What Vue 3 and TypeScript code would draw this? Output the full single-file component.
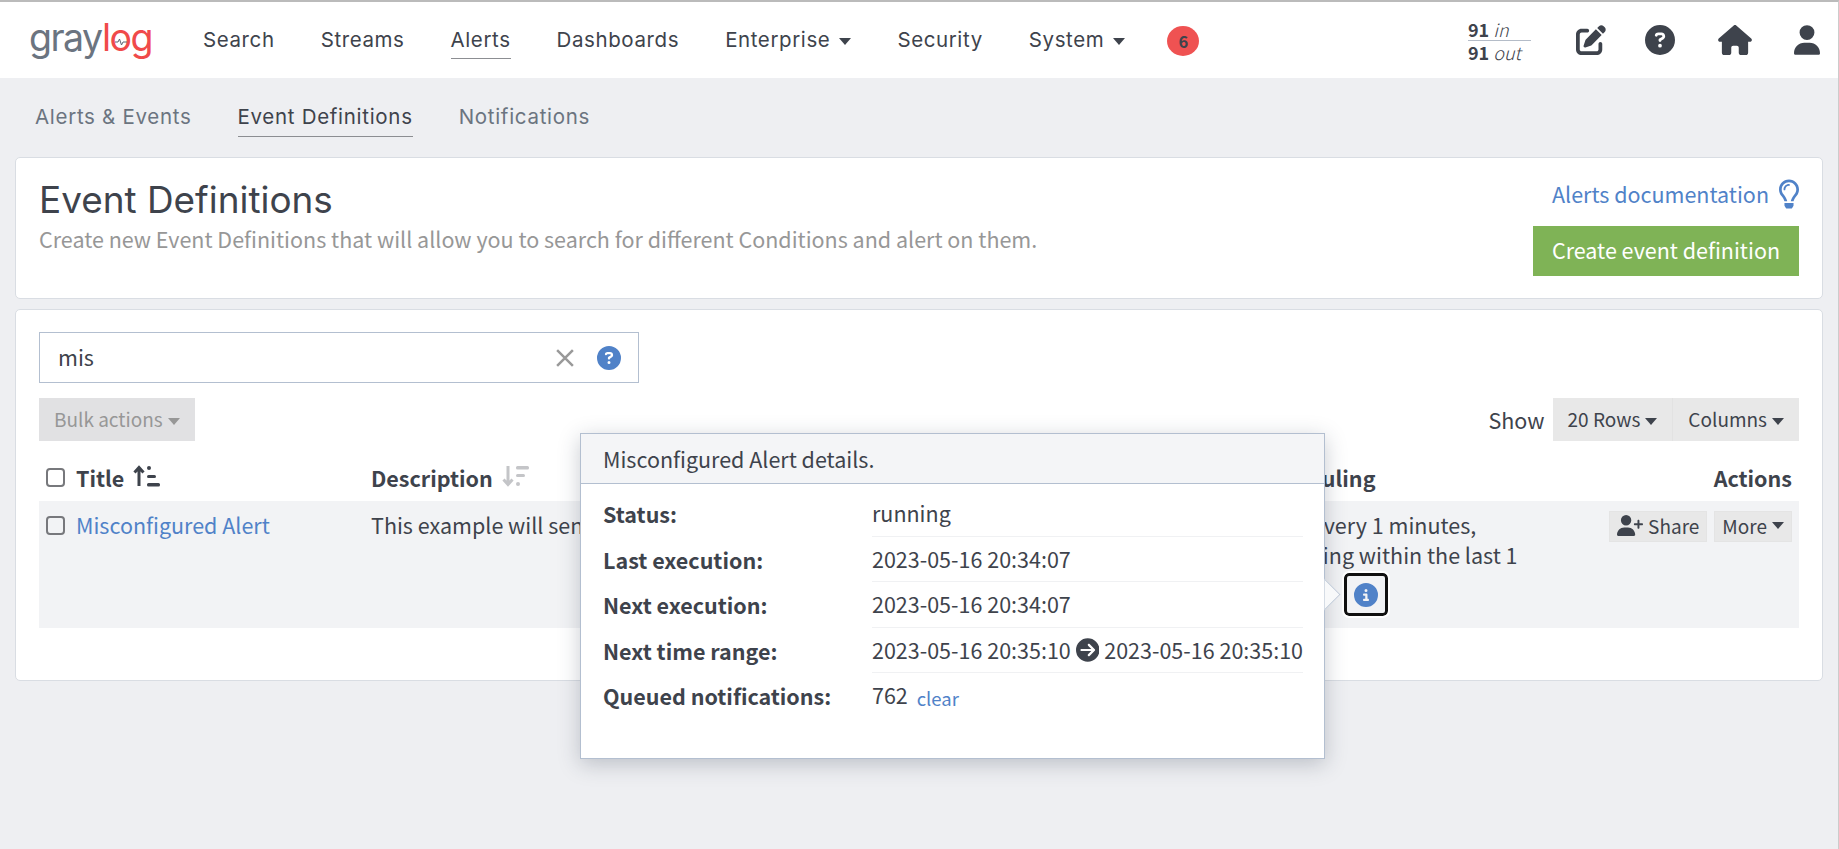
<script setup lang="ts">
const mainNav = [
  { label: 'Search' },
  { label: 'Streams' },
  { label: 'Alerts', active: true },
  { label: 'Dashboards' },
  { label: 'Enterprise', caret: true },
  { label: 'Security' },
  { label: 'System', caret: true }
]

const subNav = [
  { label: 'Alerts & Events' },
  { label: 'Event Definitions', active: true },
  { label: 'Notifications' }
]

const details = [
  { label: 'Status:', value: 'running' },
  { label: 'Last execution:', value: '2023-05-16 20:34:07' },
  { label: 'Next execution:', value: '2023-05-16 20:34:07' }
]
</script>

<template>
  <div class="page">
    <header class="topbar">
      <div class="logo">
        <span class="logo-gray">gray</span><span class="logo-red">l<span class="logo-o">o<svg class="pulse" viewBox="0 0 12 8"><path d="M0 4h3l1.5-3 2 6L8 4h4" fill="none" stroke="#5b6472" stroke-width="1" /></svg></span>g</span>
      </div>
      <nav class="main-nav">
        <a v-for="item in mainNav" :key="item.label" class="nav-link" :class="{ active: item.active }">
          {{ item.label }}<i v-if="item.caret" class="caret nav-caret"></i>
        </a>
        <span class="badge">6</span>
      </nav>
      <div class="throughput">
        <div><b>91</b> <em>in</em></div>
        <div class="out"><b>91</b> <em>out</em></div>
      </div>
      <div class="top-icons">
        <svg class="top-icon" viewBox="0 0 512 512"><path d="M471.6 21.7c-21.9-21.9-57.3-21.9-79.2 0L362.3 51.7l97.9 97.9 30.1-30.1c21.9-21.9 21.9-57.3 0-79.2L471.6 21.7zm-299.2 220c-6.1 6.1-10.8 13.6-13.5 21.9l-29.6 88.8c-2.9 8.6-.6 18.1 5.8 24.6s15.9 8.7 24.6 5.8l88.8-29.6c8.2-2.7 15.7-7.4 21.9-13.5L437.7 172.3 339.7 74.3 172.4 241.7zM96 64C43 64 0 107 0 160V416c0 53 43 96 96 96H352c53 0 96-43 96-96V320c0-17.7-14.3-32-32-32s-32 14.3-32 32v96c0 17.7-14.3 32-32 32H96c-17.7 0-32-14.3-32-32V160c0-17.7 14.3-32 32-32h96c17.7 0 32-14.3 32-32s-14.3-32-32-32H96z" /></svg>
        <svg class="top-icon help" viewBox="0 0 512 512"><path d="M256 512A256 256 0 1 0 256 0a256 256 0 1 0 0 512zM169.8 165.3c7.9-22.3 29.1-37.3 52.8-37.3h58.3c34.9 0 63.1 28.3 63.1 63.1c0 22.6-12.1 43.5-31.7 54.8L280 264.4c-.2 13-10.9 23.6-24 23.6c-13.3 0-24-10.7-24-24V250.5c0-8.6 4.6-16.5 12.1-20.8l44.3-25.4c4.7-2.7 7.6-7.7 7.6-13.1c0-8.4-6.8-15.1-15.1-15.1H222.6c-3.4 0-6.4 2.1-7.5 5.3l-.4 1.2c-4.4 12.5-18.2 19-30.6 14.6s-19-18.2-14.6-30.6l.4-1.2zM224 352a32 32 0 1 1 64 0 32 32 0 1 1 -64 0z" /></svg>
        <svg class="top-icon home" viewBox="0 0 576 512"><path d="M575.8 255.5c0 18-15 32.1-32 32.1h-32l.7 160.2c0 2.7-.2 5.4-.5 8.1V472c0 22.1-17.9 40-40 40H456c-1.1 0-2.2 0-3.3-.1c-1.4 .1-2.8 .1-4.2 .1H416 392c-22.1 0-40-17.9-40-40V448 384c0-17.7-14.3-32-32-32H256c-17.7 0-32 14.3-32 32v64 24c0 22.1-17.9 40-40 40H160 128.1c-1.5 0-3-.1-4.5-.2c-1.2 .1-2.4 .2-3.6 .2H104c-22.1 0-40-17.9-40-40V360c0-.9 0-1.9 .1-2.8V287.6H32c-18 0-32-14-32-32.1c0-9 3-17 10-24L266.4 8c7-7 15-8 22-8s15 2 21 7L564.8 231.5c8 7 12 15 11 24z" /></svg>
        <svg class="top-icon user" viewBox="0 0 448 512"><path d="M224 256A128 128 0 1 0 224 0a128 128 0 1 0 0 256zm-45.7 48C79.8 304 0 383.8 0 482.3C0 498.7 13.3 512 29.7 512H418.3c16.4 0 29.7-13.3 29.7-29.7C448 383.8 368.2 304 269.7 304H178.3z" /></svg>
      </div>
    </header>

    <nav class="sub-nav">
      <a v-for="item in subNav" :key="item.label" class="sub-link" :class="{ active: item.active }">{{ item.label }}</a>
    </nav>

    <section class="card head-card">
      <div class="head-text">
        <h1>Event Definitions</h1>
        <p>Create new Event Definitions that will allow you to search for different Conditions and alert on them.</p>
      </div>
      <div class="head-actions">
        <a class="doc-link">Alerts documentation
          <svg class="bulb" viewBox="0 0 352 512"><path d="M176 80c-52.94 0-96 43.06-96 96 0 8.84 7.16 16 16 16s16-7.16 16-16c0-35.3 28.72-64 64-64 8.84 0 16-7.16 16-16s-7.16-16-16-16zM96.06 459.17c0 3.15.93 6.22 2.68 8.84l24.51 36.84c2.97 4.46 7.97 7.14 13.32 7.14h78.85c5.36 0 10.36-2.68 13.32-7.14l24.51-36.84c1.74-2.62 2.67-5.7 2.68-8.84l.05-43.18H96.02l.04 43.18zM176 0C73.72 0 0 82.97 0 176c0 44.37 16.45 84.85 43.56 115.78 16.64 18.99 42.74 58.8 52.42 92.16v.06h48v-.12c-.01-4.77-.72-9.51-2.15-14.07-5.59-17.81-22.82-64.77-62.17-109.67-20.54-23.43-31.52-53.15-31.61-84.14-.2-73.64 59.67-128 127.95-128 70.58 0 128 57.42 128 128 0 30.97-11.24 60.85-31.65 84.14-39.11 44.61-56.42 91.47-62.1 109.46a47.507 47.507 0 0 0-2.22 14.3v.1h48v-.05c9.68-33.37 35.78-73.18 52.42-92.16C335.55 260.85 352 220.37 352 176 352 78.8 273.2 0 176 0z" /></svg>
        </a>
        <button class="create-btn">Create event definition</button>
      </div>
    </section>

    <section class="card list-card">
      <div class="search-box">
        <span class="search-value">mis</span>
        <svg class="clear-x" viewBox="0 0 16 16"><path d="M1 1l14 14M15 1L1 15" stroke="#999" stroke-width="2.200" /></svg>
        <svg class="search-help" viewBox="0 0 512 512"><path d="M256 512A256 256 0 1 0 256 0a256 256 0 1 0 0 512zM169.8 165.3c7.9-22.3 29.1-37.3 52.8-37.3h58.3c34.9 0 63.1 28.3 63.1 63.1c0 22.6-12.1 43.5-31.7 54.8L280 264.4c-.2 13-10.9 23.6-24 23.6c-13.3 0-24-10.7-24-24V250.5c0-8.6 4.6-16.5 12.1-20.8l44.3-25.4c4.7-2.7 7.6-7.7 7.6-13.1c0-8.4-6.8-15.1-15.1-15.1H222.6c-3.4 0-6.4 2.1-7.5 5.3l-.4 1.2c-4.4 12.5-18.2 19-30.6 14.6s-19-18.2-14.6-30.6l.4-1.2zM224 352a32 32 0 1 1 64 0 32 32 0 1 1 -64 0z" /></svg>
      </div>

      <div class="toolbar">
        <button class="btn disabled">Bulk actions<i class="caret"></i></button>
        <div class="toolbar-right">
          <span class="show-label">Show</span>
          <div class="btn-group">
            <button class="btn">20 Rows<i class="caret"></i></button>
            <button class="btn">Columns<i class="caret"></i></button>
          </div>
        </div>
      </div>

      <div class="table">
        <div class="cell th first">
          <span class="check"></span>Title
          <svg class="sort" viewBox="0 0 28 22"><path d="M6 21V3M1.5 7.5L6 2.5l4.500 5" fill="none" stroke="#3e434c" stroke-width="3" /><rect x="14" y="1" width="4" height="4" rx="2" fill="#3e434c" /><rect x="14" y="10" width="9" height="3" rx="1.500" fill="#3e434c" /><rect x="14" y="18" width="13" height="3.500" rx="1.500" fill="#3e434c" /></svg>
        </div>
        <div class="cell th">
          Description
          <svg class="sort" viewBox="0 0 28 22"><path d="M6 1v18M1.500 14.500L6 19.500l4.500-5" fill="none" stroke="#c4c5c8" stroke-width="3" /><rect x="14" y="1" width="13" height="3.500" rx="1.500" fill="#c4c5c8" /><rect x="14" y="9" width="9" height="3" rx="1.500" fill="#c4c5c8" /><rect x="14" y="17" width="4" height="4" rx="2" fill="#c4c5c8" /></svg>
        </div>
        <div class="cell th">Scheduling</div>
        <div class="cell th right">Actions</div>

        <div class="cell td first">
          <span class="check"></span><a class="row-link">Misconfigured Alert</a>
        </div>
        <div class="cell td">This example will send a notification.</div>
        <div class="cell td sched">
          Runs every 1 minutes, searching within the last 1 min
          <span class="focus-box">
            <svg class="info" viewBox="0 0 512 512"><path d="M256 512A256 256 0 1 0 256 0a256 256 0 1 0 0 512zM216 336h24V272H216c-13.3 0-24-10.700-24-24s10.700-24 24-24h48c13.300 0 24 10.700 24 24v88h8c13.300 0 24 10.700 24 24s-10.700 24-24 24H216c-13.300 0-24-10.700-24-24s10.700-24 24-24zm40-208a32 32 0 1 1 0 64 32 32 0 1 1 0-64z" /></svg>
          </span>
        </div>
        <div class="cell td row-actions">
          <button class="btn small share">
            <svg class="share-icon" viewBox="0 0 640 512"><path d="M96 128a128 128 0 1 1 256 0A128 128 0 1 1 96 128zM0 482.3C0 383.8 79.8 304 178.3 304h91.4C368.2 304 448 383.8 448 482.3c0 16.4-13.3 29.7-29.7 29.7H29.7C13.3 512 0 498.7 0 482.3zM504 312V248H440c-13.3 0-24-10.7-24-24s10.7-24 24-24h64V136c0-13.3 10.7-24 24-24s24 10.7 24 24v64h64c13.3 0 24 10.7 24 24s-10.7 24-24 24H552v64c0 13.3-10.7 24-24 24s-24-10.7-24-24z" /></svg>Share
          </button>
          <button class="btn small">More<i class="caret"></i></button>
        </div>
      </div>
    </section>

    <div class="popover">
      <div class="pop-title">Misconfigured Alert details.</div>
      <dl class="pop-body">
        <template v-for="row in details" :key="row.label">
          <dt>{{ row.label }}</dt>
          <dd>{{ row.value }}</dd>
        </template>
        <dt>Next time range:</dt>
        <dd class="range">
          2023-05-16 20:35:10
          <svg class="range-arrow" viewBox="0 0 512 512"><path d="M0 256a256 256 0 1 0 512 0A256 256 0 1 0 0 256zM297 385c-9.400 9.400-24.600 9.400-33.900 0s-9.400-24.600 0-33.900l71-71L120 280c-13.300 0-24-10.700-24-24s10.700-24 24-24l214.100 0-71-71c-9.400-9.400-9.400-24.600 0-33.900s24.600-9.400 33.900 0L409 239c9.400 9.400 9.400 24.600 0 33.900L297 385z" /></svg>
          2023-05-16 20:35:10
        </dd>
        <dt>Queued notifications:</dt>
        <dd class="last">762 <a class="clear-link">clear</a></dd>
      </dl>
      <span class="pop-arrow"></span>
    </div>
  </div>
</template>

<style scoped>
.page {
  position: relative;
  height: 849px;
  box-sizing: border-box;
  overflow: hidden;
  background: #eeeff2;
  border-top: 2px solid #bbb;
  border-right: 1px solid #ccc;
  color: #3e434c;
  font-family: "Noto Sans CJK SC", "Open Sans", sans-serif;
  font-size: 21.500px;
}
button {
  font-family: inherit;
  border: 0;
}
svg {
  display: block;
}

.topbar {
  display: flex;
  align-items: center;
  height: 76px;
  background: #fff;
  padding-left: 29px;
}
.logo {
  width: 174px;
  flex: none;
  font-family: Inter, sans-serif;
  font-size: 37.500px;
  letter-spacing: -1.500px;
  line-height: 1;
  margin-top: -5px;
}
.logo-gray {
  color: #6b7480;
}
.logo-red {
  color: #f04a4a;
}
.logo-o {
  position: relative;
}
.pulse {
  position: absolute;
  left: 5.500px;
  top: 23px;
  width: 12px;
  height: 8px;
}
.main-nav {
  display: flex;
  align-items: center;
  gap: 46px;
  flex: 1;
}
.nav-link {
  font-family: Inter, sans-serif;
  font-size: 20.500px;
  letter-spacing: 0.600px;
  line-height: 26px;
  padding: 6px 0 5px;
  border-bottom: 1px solid transparent;
  color: #3e434c;
}
.nav-link.active {
  border-bottom-color: #8c8e92;
}
.caret {
  display: inline-block;
  border-top: 7px solid currentColor;
  border-left: 6px solid transparent;
  border-right: 6px solid transparent;
  margin-left: 5px;
  vertical-align: 2px;
}
.nav-caret {
  margin-left: 9px;
}
.badge {
  width: 32px;
  height: 30px;
  border-radius: 50%;
  background: #ef5252;
  color: #3e434c;
  font-size: 16.500px;
  font-weight: 700;
  text-align: center;
  line-height: 30px;
  margin: 2px 0 0 -4px;
}
.throughput {
  width: 68px;
  font-size: 18px;
  line-height: 22px;
  padding-left: 5px;
  box-sizing: border-box;
  margin-right: 45px;
}
.throughput .out {
  border-top: 1px solid #b4bcc8;
}
.throughput em {
  font-weight: 300;
}
.top-icons {
  display: flex;
  align-items: center;
  gap: 39px;
  padding-right: 18px;
}
.top-icon {
  width: 30px;
  height: 30px;
  fill: #3e434c;
}
.top-icon.help {
  margin-right: 4px;
}
.top-icon.home {
  width: 34px;
}
.top-icon.user {
  width: 26px;
  margin-left: 3px;
}

.sub-nav {
  display: flex;
  gap: 46px;
  height: 79px;
  align-items: flex-start;
  padding: 26px 0 0 35px;
  box-sizing: border-box;
}
.sub-link {
  font-family: Inter, sans-serif;
  font-size: 20.500px;
  letter-spacing: 0.700px;
  line-height: 26px;
  padding-bottom: 6px;
  color: #6b7480;
  border-bottom: 1px solid transparent;
}
.sub-link.active {
  color: #3e434c;
  border-bottom-color: #8c8e92;
}

.card {
  margin: 0 15px;
  background: #fff;
  border: 1px solid #d9dde3;
  border-radius: 5px;
  box-sizing: border-box;
}
.head-card {
  height: 142px;
  display: flex;
  justify-content: space-between;
  padding: 22px 23px 0;
  margin-bottom: 10px;
}
h1 {
  margin: 0;
  font-family: Inter, sans-serif;
  font-size: 36.900px;
  font-weight: 400;
  line-height: 40px;
}
.head-text p {
  margin: 5px 0 0;
  color: #979797;
  line-height: 28px;
}
.head-actions {
  display: flex;
  flex-direction: column;
  align-items: flex-end;
  gap: 16px;
}
.doc-link {
  display: flex;
  align-items: center;
  gap: 10px;
  color: #5082c8;
  line-height: 32px;
  margin-top: -2px;
}
.bulb {
  width: 20px;
  height: 30px;
  fill: #5082c8;
}
.create-btn {
  width: 266px;
  height: 50px;
  padding-bottom: 5px;
  background: #7fb356;
  color: #fff;
  font-size: 21.500px;
}

.list-card {
  height: 372px;
  padding: 22px 23px 0;
}
.search-box {
  display: flex;
  align-items: center;
  width: 600px;
  height: 51px;
  box-sizing: border-box;
  border: 1px solid #b3bfd0;
  padding: 0 17px 0 18px;
}
.search-value {
  flex: 1;
  font-size: 21.500px;
  padding-bottom: 2px;
}
.clear-x {
  width: 18px;
  height: 18px;
  margin-right: 23px;
}
.search-help {
  width: 24px;
  height: 24px;
  fill: #5082c8;
}
.toolbar {
  display: flex;
  justify-content: space-between;
  margin-top: 15px;
}
.toolbar-right {
  display: flex;
  align-items: center;
  gap: 8px;
}
.btn-group {
  display: flex;
  gap: 1px;
  background: #e2e2e2;
}
.btn {
  height: 43px;
  padding: 0 15px 3px;
  background: #e8e8e8;
  color: #3e434c;
  font-size: 19px;
}
.btn.disabled {
  background: #e1e1e3;
  color: #979797;
}
.table {
  display: grid;
  grid-template-columns: 324px 886px 276px 274px;
}
.cell {
  box-sizing: border-box;
  padding: 0 7px 0 8px;
}
.cell.first {
  padding-left: 7px;
}
.th {
  height: 60px;
  padding-top: 12px;
  display: flex;
  align-items: center;
  font-weight: 700;
}
.th.right {
  justify-content: flex-end;
}
.sort {
  width: 28px;
  height: 22px;
  margin-left: 9px;
  margin-top: -3px;
}
.td {
  height: 127px;
  background: #f2f3f5;
  padding-top: 9px;
  line-height: 30px;
}
.first {
  display: flex;
  align-items: flex-start;
}
.th.first {
  align-items: center;
}
.check {
  width: 19px;
  height: 19px;
  box-sizing: border-box;
  border: 2px solid #77787c;
  border-radius: 4px;
  background: #fff;
  margin-right: 11px;
  flex: none;
}
.td .check {
  margin-top: 6px;
  background: transparent;
}
.row-link {
  color: #5082c8;
}
.focus-box {
  position: relative;
  top: 3px;
  display: inline-flex;
  align-items: center;
  justify-content: center;
  width: 44px;
  height: 43px;
  box-sizing: border-box;
  border: 3px solid #111;
  border-radius: 5px;
  outline: 2px solid #fff;
  vertical-align: middle;
  margin-left: 43px;
}
.info {
  width: 24px;
  height: 24px;
  fill: #5082c8;
}
.row-actions {
  display: flex;
  justify-content: flex-end;
  align-items: flex-start;
  gap: 7px;
  padding-top: 10px;
}
.btn.small {
  height: 31px;
  padding: 0 7px 2px;
  display: flex;
  align-items: center;
  border: 1px solid #e4e4e4;
}
.share-icon {
  width: 26px;
  height: 21px;
  fill: #3e434c;
  margin-right: 5px;
}

.popover {
  position: absolute;
  left: 580px;
  top: 431px;
  width: 745px;
  height: 326px;
  box-sizing: border-box;
  background: #fff;
  border: 1px solid #b3bfd0;
  box-shadow: 0 5px 20px rgba(40, 50, 70, 0.25);
}
.pop-title {
  height: 50px;
  box-sizing: border-box;
  padding: 0 22px;
  line-height: 49px;
  background: #f4f5f7;
  border-bottom: 1px solid #b3bfd0;
}
.pop-body {
  display: grid;
  grid-template-columns: 269px 431px;
  margin: 7px 0 0 22px;
}
dt {
  font-weight: 700;
  line-height: 45px;
  height: 45.500px;
}
dd {
  margin: 0;
  line-height: 44.500px;
  height: 45.500px;
  border-bottom: 1px solid #f0f1f3;
  box-sizing: border-box;
  white-space: nowrap;
}
dd.last {
  border: 0;
}
.range {
  display: flex;
  align-items: center;
  gap: 5px;
}
.range-arrow {
  width: 24px;
  height: 24px;
  fill: #3e434c;
}
.clear-link {
  position: relative;
  top: 2px;
  color: #5082c8;
  font-size: 18.500px;
  margin-left: 4px;
}
.pop-arrow {
  position: absolute;
  right: -12px;
  top: 149px;
  width: 23px;
  height: 23px;
  background: #f8f9fa;
  border: 1px solid #b9c4d3;
  border-left: 0;
  border-bottom: 0;
  transform: rotate(45deg);
  box-sizing: border-box;
  clip-path: polygon(0 0, 100% 0, 100% 100%);
}
</style>

<style>
body {
  margin: 0;
  background: #eeeff2;
}
</style>
